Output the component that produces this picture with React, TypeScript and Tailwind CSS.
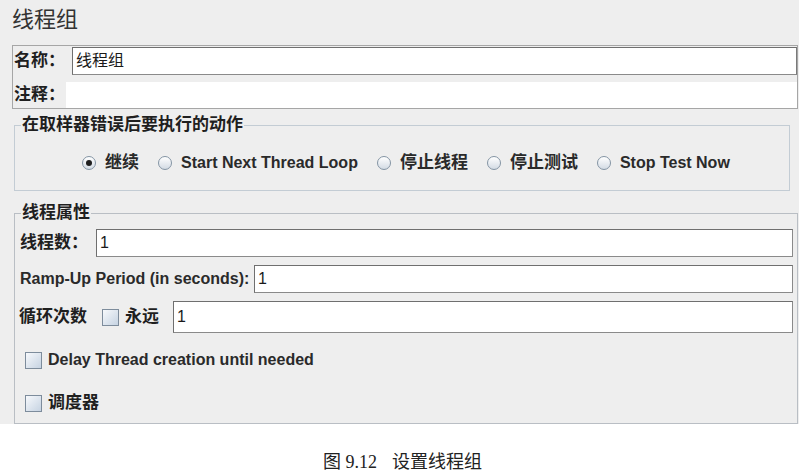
import React from "react";

function Radio({ checked }: { checked?: boolean }) {
  return (
    <span className="relative flex h-[14px] w-[14px] shrink-0 items-center justify-center rounded-full border border-[#8494a4] bg-gradient-to-b from-[#ffffff] to-[#d3dbe4]">
      {checked && <span className="h-[6px] w-[6px] rounded-full bg-[#1e1e1e]" />}
    </span>
  );
}

function Check() {
  return (
    <span className="block h-[17px] w-[17px] shrink-0 border border-[#7d8c9c] bg-gradient-to-br from-[#f7f9fc] to-[#c6d3e2]" />
  );
}

function Field({ value, className }: { value?: string; className: string }) {
  return (
    <div
      className={
        "flex items-center border border-[#8a8a8a] border-t-[#6f6f6f] border-l-[#6f6f6f] bg-white pl-[3px] text-[16px] font-normal text-[#1a1a1a] " +
        className
      }
    >
      {value}
    </div>
  );
}

export default function App() {
  return (
    <div className="h-[473px] w-[799px] bg-white font-['Liberation_Sans','Noto_Sans_CJK_SC',sans-serif] text-[#1f1f1f]">
      <div className="flex h-[424px] flex-col bg-[#eeeeee] pl-[12px]">
        <div className="flex h-[45px] items-start pt-[6px] text-[22px] leading-[28px] text-[#333333]">线程组</div>

        <div className="mr-[1px] flex flex-col border border-[#a6a6a6]">
          <div className="flex h-[31px] items-start pt-[1px]">
            <span className="flex h-[28px] w-[59px] items-center pl-[1px] text-[17px] font-bold">名称：</span>
            <Field value="线程组" className="h-[28px] flex-1 border-r-[#7a7a7a]" />
          </div>
          <div className="mt-[5px] flex h-[26px]">
            <span className="flex w-[53px] items-center pl-[1px] text-[17px] font-bold">注释：</span>
            <div className="flex-1 bg-white" />
          </div>
        </div>

        <fieldset className="ml-[2px] mr-[9px] mt-[7px] border border-[#c3ccd4] pb-[14px]">
          <legend className="ml-[6px] px-[1px] text-[17px] font-bold leading-[18px]">在取样器错误后要执行的动作</legend>
          <div className="mt-[16px] flex h-[26px] items-center pl-[67px] text-[16px] font-bold text-[#2a2a2a]">
            <Radio checked />
            <span className="ml-[9px] mr-[19px] text-[17px]">继续</span>
            <Radio />
            <span className="ml-[9px] mr-[19px]">Start Next Thread Loop</span>
            <Radio />
            <span className="ml-[9px] mr-[19px] text-[17px]">停止线程</span>
            <Radio />
            <span className="ml-[9px] mr-[19px] text-[17px]">停止测试</span>
            <Radio />
            <span className="ml-[9px]">Stop Test Now</span>
          </div>
        </fieldset>

        <fieldset className="ml-[2px] mr-[1px] mt-[13px] flex-1 border border-[#b9bec4] pb-[7px]">
          <legend className="ml-[6px] px-[1px] text-[17px] font-bold leading-[18px]">线程属性</legend>
          <div className="mt-[7px] flex h-[28px] items-center pl-[5px] pr-[4px]">
            <span className="w-[76px] text-[17px] font-bold">线程数：</span>
            <Field value="1" className="h-[28px] flex-1" />
          </div>
          <div className="mt-[8px] flex h-[28px] items-center pl-[5px] pr-[4px]">
            <span className="w-[234px] text-[16px] font-bold text-[#2a2a2a]">Ramp-Up Period (in seconds):</span>
            <Field value="1" className="h-[28px] flex-1" />
          </div>
          <div className="mt-[8px] flex h-[32px] items-center pl-[4px] pr-[4px]">
            <span className="w-[83px] text-[17px] font-bold">循环次数</span>
            <Check />
            <span className="ml-[6px] w-[48px] text-[17px] font-bold">永远</span>
            <Field value="1" className="h-[32px] flex-1" />
          </div>
          <div className="mt-[14px] flex h-[26px] items-center pl-[10px]">
            <Check />
            <span className="ml-[6px] text-[16px] font-bold text-[#2a2a2a]">Delay Thread creation until needed</span>
          </div>
          <div className="mt-[17px] flex h-[26px] items-center pl-[10px]">
            <Check />
            <span className="ml-[6px] text-[17px] font-bold">调度器</span>
          </div>
        </fieldset>
      </div>
      <div className="flex h-[49px] items-start justify-center pt-[28px] pl-[6px] font-['Liberation_Serif','Noto_Sans_CJK_SC',serif] text-[18px] leading-[20px] text-[#222222]">
        <span>图 9.12</span>
        <span className="ml-[15px]">设置线程组</span>
      </div>
    </div>
  );
}
